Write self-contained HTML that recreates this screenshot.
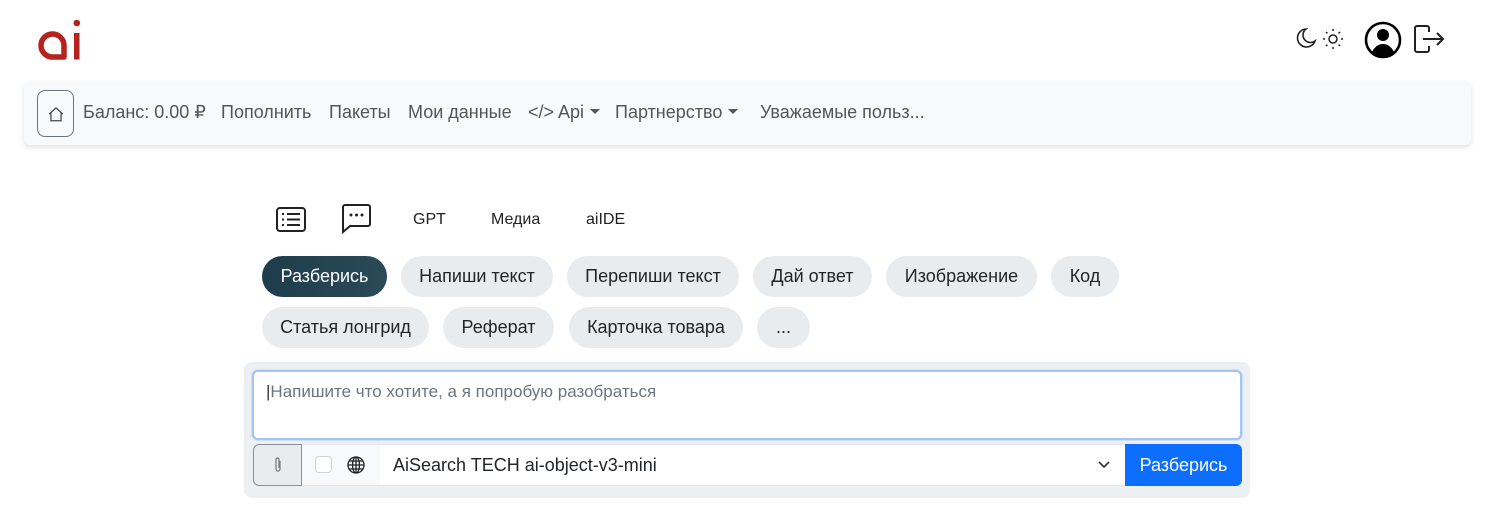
<!DOCTYPE html>
<html><head><meta charset="utf-8"><style>
*{box-sizing:border-box;margin:0;padding:0}
body{width:1500px;height:523px;background:#fff;font-family:"Liberation Sans",Arial,sans-serif;position:relative;overflow:hidden;color:#212529}
.a{position:absolute}
.nav{left:24px;top:82px;width:1447px;height:63px;background:#f8f9fa;border-radius:6px;box-shadow:0 2px 6px rgba(0,0,0,.12)}
.home{left:37px;top:90px;width:37px;height:47px;border:1px solid #6c757d;border-radius:8px;display:flex;align-items:center;justify-content:center}
.nt{top:102px;font-size:18px;color:#555;white-space:nowrap}
.car{display:inline-block;width:0;height:0;border-left:5px solid transparent;border-right:5px solid transparent;border-top:5px solid #555;vertical-align:middle;margin-left:6px;position:relative;top:-2px}
.tab{top:211px;font-size:16px;color:#222}
.pill{height:41px;border-radius:21px;background:#e9ecef;font-size:18px;line-height:41px;text-align:center;color:#212529}
.dark{background:linear-gradient(90deg,#1e3d4c,#2a4a58);color:#fff}
</style></head><body>
<svg class="a" style="left:36px;top:16px" width="48" height="46" viewBox="0 0 48 46"><path d="M28 41H17a11.5 11.5 0 1 1 11-11.5z" fill="none" stroke="#b5231f" stroke-width="5.5" stroke-linejoin="round"/><rect x="38" y="17" width="5.5" height="26.5" fill="#b5231f"/><circle cx="40.8" cy="7" r="3.3" fill="#b5231f"/></svg>
<svg class="a" style="left:1293px;top:26px" width="54" height="26" viewBox="0 0 54 26"><path d="M13 3a9 9 0 1 0 9 12a7 7 0 0 1 -9 -12z" fill="none" stroke="#222" stroke-width="1.6"/><circle cx="40" cy="13" r="4" fill="none" stroke="#222" stroke-width="1.5"/><g stroke="#222" stroke-width="1.5"><path d="M40 3v2M40 21v2M30 13h2M48 13h2M33 6l1.4 1.4M45.6 18.6l1.4 1.4M33 20l1.4-1.4M45.6 7.4l1.4-1.4"/></g></svg>
<svg class="a" style="left:1364px;top:21px" width="38" height="38" viewBox="0 0 38 38"><circle cx="19" cy="19" r="17" fill="none" stroke="#000" stroke-width="2.6"/><circle cx="19" cy="14" r="6" fill="#000"/><path d="M8 31c3-6 7-8 11-8s8 2 11 8a17 17 0 0 1-22 0z" fill="#000"/></svg>
<svg class="a" style="left:1413px;top:24px" width="34" height="30" viewBox="0 0 34 30"><path d="M16 8V4a2 2 0 0 0-2-2H4a2 2 0 0 0-2 2v22a2 2 0 0 0 2 2h10a2 2 0 0 0 2-2v-4" fill="none" stroke="#222" stroke-width="2"/><path d="M10 15h20M24 9l6 6-6 6" fill="none" stroke="#222" stroke-width="2"/></svg>
<div class="a nav"></div>
<div class="a home"><svg width="18" height="18" viewBox="0 0 16 16"><path d="M2 8L8 2.5 14 8M3.5 7v7h9V7" fill="none" stroke="#444" stroke-width="1.1"/></svg></div>
<div class="a nt" style="left:83px">Баланс: 0.00 ₽</div>
<div class="a nt" style="left:221px">Пополнить</div>
<div class="a nt" style="left:329px">Пакеты</div>
<div class="a nt" style="left:408px">Мои данные</div>
<div class="a nt" style="left:528px">&lt;/&gt; Api<span class="car"></span></div>
<div class="a nt" style="left:615px">Партнерство<span class="car"></span></div>
<div class="a nt" style="left:760px">Уважаемые польз...</div>
<svg class="a" style="left:276px;top:207px" width="30" height="25" viewBox="0 0 30 25"><rect x="1" y="1" width="28" height="23" rx="3" fill="none" stroke="#222" stroke-width="2"/><g stroke="#222" stroke-width="2"><path d="M6 7h2M11 7h13M6 12.5h2M11 12.5h13M6 18h2M11 18h13"/></g></svg>
<svg class="a" style="left:341px;top:204px" width="31" height="30" viewBox="0 0 31 30"><path d="M2 3a2 2 0 0 1 2-2h23a2 2 0 0 1 2 2v17a2 2 0 0 1-2 2H9l-7 6z" fill="none" stroke="#222" stroke-width="2"/><g fill="#222"><circle cx="10" cy="11" r="1.5"/><circle cx="15.5" cy="11" r="1.5"/><circle cx="21" cy="11" r="1.5"/></g></svg>
<div class="a tab" style="left:413px">GPT</div>
<div class="a tab" style="left:491px">Медиа</div>
<div class="a tab" style="left:586px">aiIDE</div>
<div class="a pill dark" style="left:262px;top:256px;width:125px">Разберись</div>
<div class="a pill" style="left:401px;top:256px;width:152px">Напиши текст</div>
<div class="a pill" style="left:567px;top:256px;width:172px">Перепиши текст</div>
<div class="a pill" style="left:753px;top:256px;width:119px">Дай ответ</div>
<div class="a pill" style="left:886px;top:256px;width:151px">Изображение</div>
<div class="a pill" style="left:1051px;top:256px;width:68px">Код</div>
<div class="a pill" style="left:262px;top:307px;width:167px">Статья лонгрид</div>
<div class="a pill" style="left:443px;top:307px;width:111px">Реферат</div>
<div class="a pill" style="left:569px;top:307px;width:174px">Карточка товара</div>
<div class="a pill" style="left:757px;top:307px;width:53px">...</div>
<div class="a" style="left:244px;top:362px;width:1006px;height:136px;background:#edf0f3;border-radius:8px"></div>
<div class="a" style="left:252px;top:370px;width:990px;height:70px;background:#fff;border:2px solid #a6c4f0;border-radius:6px;box-shadow:0 0 0 1px #cfdff7"></div>
<div class="a" style="left:266px;top:382px;font-size:17px;color:#6c757d"><span style="color:#333">|</span>Напишите что хотите, а я попробую разобраться</div>
<div class="a" style="left:253px;top:444px;width:49px;height:42px;background:#e9ecef;border:1px solid #8a9096;border-radius:6px 0 0 6px;display:flex;align-items:center;justify-content:center"><svg width="10" height="18" viewBox="0 0 10 18"><path d="M7 5v8a2 2 0 0 1-4 0V3.5a1.5 1.5 0 0 1 3 0V12" fill="none" stroke="#777" stroke-width="1.2"/></svg></div>
<div class="a" style="left:302px;top:444px;width:78px;height:42px;background:#f8f9fa;border-top:1px solid #e3e6e9;border-bottom:1px solid #e3e6e9"></div>
<div class="a" style="left:315px;top:456px;width:17px;height:17px;background:#fff;border:1px solid #d0d4d8;border-radius:4px"></div>
<svg class="a" style="left:347px;top:456px" width="18" height="18" viewBox="0 0 18 18"><g fill="none" stroke="#222" stroke-width="1.3"><circle cx="9" cy="9" r="8"/><ellipse cx="9" cy="9" rx="3.5" ry="8"/><path d="M1 9h16M2.5 5h13M2.5 13h13M9 1v16"/></g></svg>
<div class="a" style="left:380px;top:444px;width:745px;height:42px;background:#fff;border-top:1px solid #e3e6e9;border-bottom:1px solid #e3e6e9"></div>
<div class="a" style="left:393px;top:455px;font-size:18px;color:#212529">AiSearch TECH ai-object-v3-mini</div>
<svg class="a" style="left:1097px;top:460px" width="14" height="10" viewBox="0 0 14 10"><path d="M2 2l5 5 5-5" fill="none" stroke="#333" stroke-width="1.6"/></svg>
<div class="a" style="left:1125px;top:444px;width:117px;height:42px;background:#0d6efd;border-radius:0 6px 6px 0;color:#fff;font-size:18px;line-height:42px;text-align:center">Разберись</div>
</body></html>
